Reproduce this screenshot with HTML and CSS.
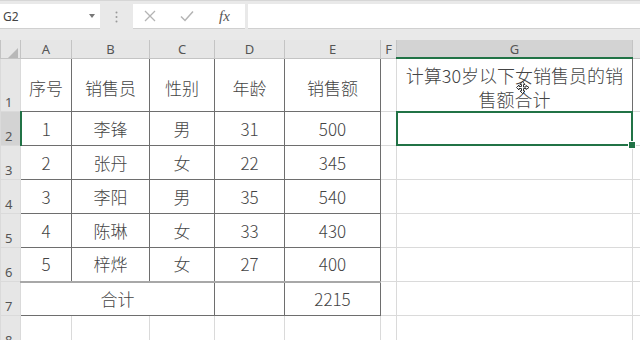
FILE: index.html
```html
<!DOCTYPE html>
<html lang="zh-CN">
<head>
    <meta charset="UTF-8">
    <title>销售表</title>
    <link rel="stylesheet" href="styles.css">
</head>
<body>
    <div class="toolbar">
        <div class="namebox">
            <span>G2</span>
            <svg class="caret" width="6" height="4" viewBox="0 0 6 4"><path d="M0 0h6L3 4z" fill="#777"/></svg>
        </div>
        <div class="grip">
            <svg width="3" height="12" viewBox="0 0 3 12"><circle cx="1.5" cy="1.5" r="1" fill="#999"/><circle cx="1.5" cy="6" r="1" fill="#999"/><circle cx="1.5" cy="10.5" r="1" fill="#999"/></svg>
        </div>
        <div class="fxbtns">
            <svg width="12" height="12" viewBox="0 0 12 12"><path d="M1 1l10 10M11 1L1 11" stroke="#b4b4b4" stroke-width="1.3"/></svg>
            <svg width="14" height="12" viewBox="0 0 14 12"><path d="M1 6.5l4 4L13 1.5" stroke="#b4b4b4" stroke-width="1.5" fill="none"/></svg>
            <span class="fx">fx</span>
        </div>
        <div class="formula"></div>
    </div>

    <table class="sheet">
        <colgroup>
            <col style="width:20px">
            <col style="width:51px">
            <col style="width:78px">
            <col style="width:65px">
            <col style="width:70px">
            <col style="width:96px">
            <col style="width:16px">
            <col style="width:236px">
            <col style="width:8px">
        </colgroup>
        <tr class="hdr">
            <th class="corner"><svg width="10" height="10" viewBox="0 0 10 10"><path d="M10 0v10H0z" fill="#b8b8b8"/></svg></th>
            <th>A</th><th>B</th><th>C</th><th>D</th><th>E</th><th>F</th><th class="on">G</th><th></th>
        </tr>
        <tr class="r1">
            <th class="rn">1</th>
            <td class="b">序号</td><td class="b">销售员</td><td class="b">性别</td><td class="b">年龄</td><td class="b">销售额</td>
            <td></td>
            <td class="b note">计算30岁以下女销售员的销<br>售额合计
                <svg class="cursor" width="13" height="13" viewBox="0 0 13 13"><path d="M6.5 0.5l2.5 3H7.5v2.5H10V4.5l3 2-3 2V7.5H7.5V10H9l-2.5 2.5L4 10h1.5V7.5H3V9L0.5 6.5 3 4v1.5h2.5V3.5H4z" fill="#fff" stroke="#222" stroke-width="0.9"/></svg>
            </td>
            <td></td>
        </tr>
        <tr>
            <th class="rn on">2</th>
            <td class="b">1</td><td class="b">李锋</td><td class="b">男</td><td class="b">31</td><td class="b">500</td>
            <td></td>
            <td class="sel"><div class="selbox"></div><div class="handle"></div></td>
            <td></td>
        </tr>
        <tr>
            <th class="rn">3</th>
            <td class="b">2</td><td class="b">张丹</td><td class="b">女</td><td class="b">22</td><td class="b">345</td>
            <td></td><td></td><td></td>
        </tr>
        <tr>
            <th class="rn">4</th>
            <td class="b">3</td><td class="b">李阳</td><td class="b">男</td><td class="b">35</td><td class="b">540</td>
            <td></td><td></td><td></td>
        </tr>
        <tr>
            <th class="rn">5</th>
            <td class="b">4</td><td class="b">陈琳</td><td class="b">女</td><td class="b">33</td><td class="b">430</td>
            <td></td><td></td><td></td>
        </tr>
        <tr>
            <th class="rn">6</th>
            <td class="b">5</td><td class="b">梓烨</td><td class="b">女</td><td class="b">27</td><td class="b">400</td>
            <td></td><td></td><td></td>
        </tr>
        <tr class="total">
            <th class="rn">7</th>
            <td class="b" colspan="3">合计</td><td class="b"></td><td class="b">2215</td>
            <td></td><td></td><td></td>
        </tr>
        <tr>
            <th class="rn">8</th>
            <td></td><td></td><td></td><td></td><td></td><td></td><td></td><td></td>
        </tr>
    </table>
</body>
</html>
```

FILE: styles.css
```css
body {
    margin: 0;
    background: #fff;
    font-family: "Noto Sans CJK SC", sans-serif;
    overflow: hidden;
}
.toolbar {
    height: 40px;
    box-sizing: border-box;
    padding-top: 3px;
    background: #e9e9e9;
    border-top: 1px solid #d6d6d6;
    display: flex;
    align-items: flex-start;
}
.namebox {
    width: 100px;
    height: 25px;
    box-sizing: border-box;
    background: #fff;
    border-bottom: 1px solid #d0d0d0;
    display: flex;
    align-items: center;
    justify-content: space-between;
    padding: 0 5px 0 3px;
    font-family: "Noto Sans", sans-serif;
    font-size: 12px;
    color: #444;
}
.grip {
    width: 33px;
    height: 25px;
    display: flex;
    align-items: center;
    justify-content: center;
}
.fxbtns {
    width: 112px;
    height: 25px;
    box-sizing: border-box;
    background: #fff;
    border-bottom: 1px solid #d0d0d0;
    display: flex;
    align-items: center;
    padding-left: 11px;
    gap: 24px;
}
.fx {
    font-family: "Liberation Serif", serif;
    font-style: italic;
    font-size: 15px;
    color: #555;
    margin-left: 1px;
}
.formula {
    flex: 1;
    margin-left: 3px;
    height: 25px;
    box-sizing: border-box;
    background: #fff;
    border-bottom: 1px solid #d0d0d0;
}
.sheet {
    width: 640px;
    table-layout: fixed;
    border-collapse: collapse;
}
.sheet th,
.sheet td {
    border: 1px solid #dadada;
    padding: 0;
    text-align: center;
    font-weight: normal;
}
.hdr th {
    height: 17px;
    background: #e6e6e6;
    border-color: #c4c4c4;
    border-top: none;
    font-family: "Noto Sans", sans-serif;
    font-size: 13px;
    color: #555;
    line-height: 16px;
}
.hdr .corner {
    text-align: right;
    vertical-align: bottom;
    padding-right: 2px;
    line-height: 0;
}
.hdr th.on {
    background: #d3d3d3;
    border-bottom: 2px solid #217346;
}
.sheet tr {
    height: 34px;
}
.sheet tr.hdr {
    height: 17px;
}
.sheet tr.r1 {
    height: 52px;
}
.rn {
    background: #e6e6e6;
    border-color: #c4c4c4;
    border-left: none;
    text-align: left !important;
    vertical-align: bottom;
    padding-left: 4px !important;
    padding-bottom: 1px !important;
    font-family: "Noto Sans", sans-serif;
    font-size: 13px;
    color: #555;
    line-height: 15px;
}
.rn.on {
    background: #d3d3d3;
    border-right: 2px solid #217346;
}
.sheet td {
    font-size: 17px;
    font-weight: 300;
    color: #444;
    line-height: 20px;
}
.sheet td.b {
    border-color: #6e6e6e;
}
.r1 td.b {
    padding-top: 6px;
}
.total td.b {
    border-top: 2px solid #a8a8a8;
}
.note {
    position: relative;
    vertical-align: top;
    padding-top: 4px !important;
    font-size: 18px !important;
    line-height: 24px !important;
}
.cursor {
    position: absolute;
    left: 119px;
    top: 22px;
}
.sel {
    position: relative;
}
.selbox {
    position: absolute;
    left: -1px;
    top: -1px;
    right: -1px;
    bottom: -1px;
    border: 2px solid #217346;
}
.handle {
    position: absolute;
    right: -4px;
    bottom: -4px;
    width: 6px;
    height: 6px;
    background: #217346;
    border: 1px solid #fff;
}
```
